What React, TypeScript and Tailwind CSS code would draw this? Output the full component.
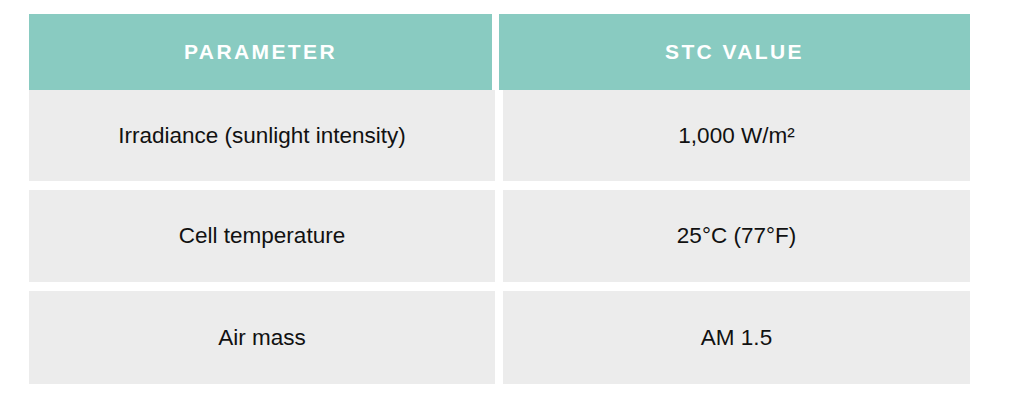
import React from 'react';

const rows = [
  { param: 'Irradiance (sunlight intensity)', value: '1,000 W/m²', h: 'h-[91px]' },
  { param: 'Cell temperature', value: '25°C (77°F)', h: 'h-[92px]' },
  { param: 'Air mass', value: 'AM 1.5', h: 'h-[93px]' },
];

const App: React.FC = () => {
  return (
    <div className="w-[1024px] h-[405px] bg-white pt-[14px] pl-[29px] font-['Liberation_Sans',Arial,sans-serif]">
      <div className="flex gap-[7px] h-[76px]">
        <div className="w-[463px] bg-[#89cbc1] flex items-center justify-center text-white font-bold text-[21px] tracking-[2.4px] uppercase">
          Parameter
        </div>
        <div className="w-[471px] bg-[#89cbc1] flex items-center justify-center text-white font-bold text-[21px] tracking-[2.4px] uppercase">
          STC Value
        </div>
      </div>
      <div className="flex flex-col gap-[9px]">
        {rows.map((row) => (
          <div key={row.param} className={`flex gap-[8px] ${row.h}`}>
            <div className="w-[466px] bg-[#ececec] flex items-center justify-center text-[#111] text-[22.5px]">
              {row.param}
            </div>
            <div className="w-[467px] bg-[#ececec] flex items-center justify-center text-[#111] text-[22.5px]">
              {row.value}
            </div>
          </div>
        ))}
      </div>
    </div>
  );
};

export default App;
